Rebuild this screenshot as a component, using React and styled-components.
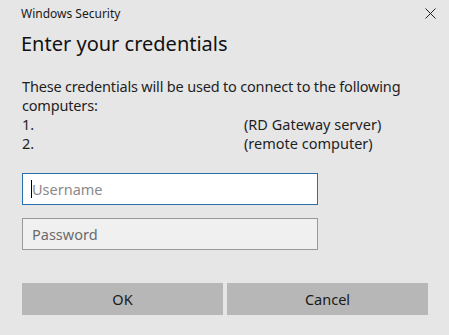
import React from "react";
import styled, { createGlobalStyle } from "styled-components";

const Global = createGlobalStyle`
  html, body { margin: 0; padding: 0; background: #e6e6e6; }
  * { box-sizing: border-box; }
`;

const Window = styled.div`
  width: 449px;
  height: 335px;
  background: #e6e6e6;
  font-family: "Noto Sans", "Open Sans", sans-serif;
  color: #1a1a1a;
  display: flex;
  flex-direction: column;
  padding: 0 21px 0 22px;
`;

const TitleBar = styled.div`
  display: flex;
  justify-content: space-between;
  align-items: center;
  height: 26px;
  margin-right: -14px;
`;

const TitleText = styled.div`
  font-size: 12px;
  color: #1a1a1a;
  margin-left: -1px;
`;

const CloseButton = styled.button`
  width: 24px;
  height: 24px;
  border: none;
  background: transparent;
  padding: 0;
  display: flex;
  align-items: center;
  justify-content: center;
`;

const Heading = styled.h1`
  margin: 4px 0 0 -1px;
  font-size: 20px;
  font-weight: 400;
  line-height: 28px;
  color: #111;
`;

const Description = styled.div`
  margin-top: 19px;
  font-size: 14.5px;
  line-height: 19px;
  letter-spacing: -0.18px;
  color: #1f1f1f;
  width: 390px;
`;

const Computers = styled.div`
  display: grid;
  grid-template-columns: 222px auto;
  font-size: 14.5px;
  line-height: 19px;
  color: #1f1f1f;
`;

const Fields = styled.div`
  display: flex;
  flex-direction: column;
  gap: 13px;
  margin-top: 20px;
  width: 296px;
`;

const FieldWrap = styled.div`
  position: relative;
`;

const Caret = styled.span`
  position: absolute;
  left: 9px;
  top: 7px;
  width: 1px;
  height: 18px;
  background: #000;
  pointer-events: none;
`;

const Field = styled.input`
  display: block;
  height: 32px;
  width: 100%;
  font-family: inherit;
  font-size: 14.5px;
  padding: 0 9px;
  border: 1px solid ${(p) => (p.$focused ? "#2a6fad" : "#999999")};
  background: ${(p) => (p.$focused ? "#ffffff" : "#f0f0f0")};
  color: #222;
  outline: none;
  caret-color: transparent;
  &::placeholder { color: ${(p) => (p.$focused ? "#8a8a8a" : "#6b6b6b")}; }
`;

const ButtonRow = styled.div`
  display: grid;
  grid-template-columns: 1fr 1fr;
  gap: 4px;
  margin-top: 33px;
`;

const Button = styled.button`
  height: 32px;
  border: none;
  background: #b7b7b7;
  font-family: inherit;
  font-size: 14.5px;
  color: #1a1a1a;
  padding: 0;
`;

export default function App() {
  return (
    <>
      <Global />
      <Window>
        <TitleBar>
          <TitleText>Windows Security</TitleText>
          <CloseButton aria-label="Close">
            <svg width="11" height="11" viewBox="0 0 11 11">
              <path d="M0.5 0.5 L10.5 10.5 M10.5 0.5 L0.5 10.5" stroke="#222" strokeWidth="1" fill="none" />
            </svg>
          </CloseButton>
        </TitleBar>
        <Heading>Enter your credentials</Heading>
        <Description>These credentials will be used to connect to the following computers:</Description>
        <Computers>
          <span>1.</span>
          <span>(RD Gateway server)</span>
          <span>2.</span>
          <span>(remote computer)</span>
        </Computers>
        <Fields>
          <FieldWrap>
            <Field $focused placeholder="Username" />
            <Caret />
          </FieldWrap>
          <FieldWrap>
            <Field type="password" placeholder="Password" />
          </FieldWrap>
        </Fields>
        <ButtonRow>
          <Button>OK</Button>
          <Button>Cancel</Button>
        </ButtonRow>
      </Window>
    </>
  );
}
